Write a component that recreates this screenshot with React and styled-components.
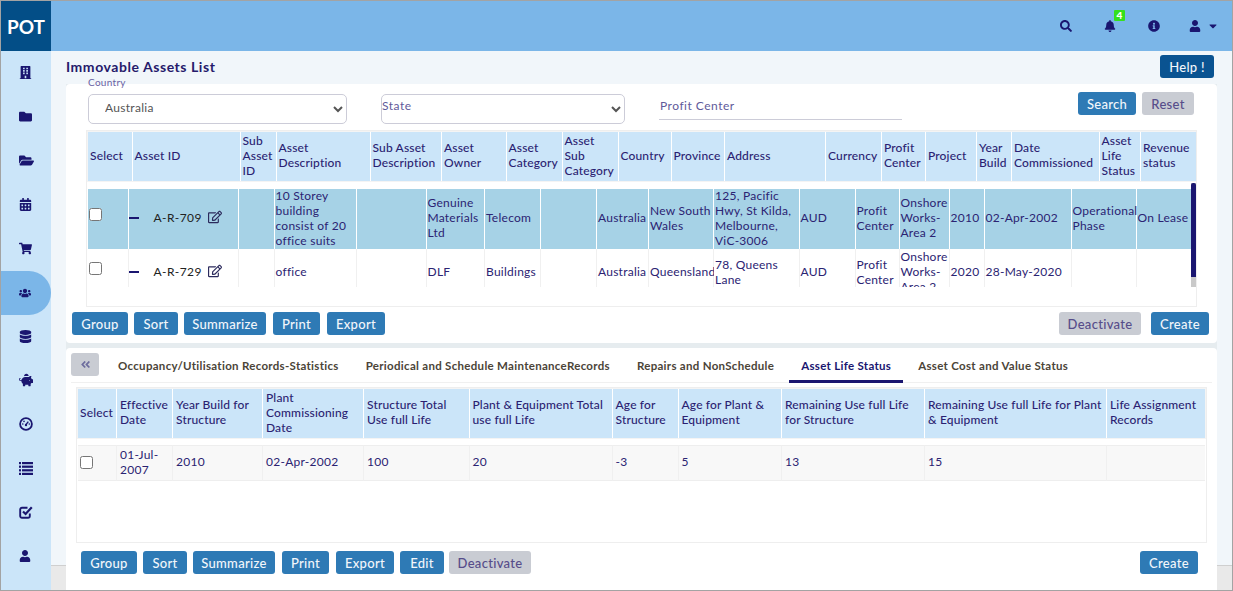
import React from "react";
import styled, { createGlobalStyle } from "styled-components";
import {
  FaBuilding,
  FaFolder,
  FaFolderOpen,
  FaCalendarAlt,
  FaShoppingCart,
  FaUsers,
  FaDatabase,
  FaPiggyBank,
  FaUser,
  FaSearch,
  FaBell,
  FaInfoCircle,
  FaCaretDown,
  FaRegEdit,
  FaAngleDoubleLeft,
} from "react-icons/fa";

const NAVY = "#1a1670";
const TEXT = "#2b2372";

const GlobalStyle = createGlobalStyle`
  * { box-sizing: border-box; }
  html, body { margin: 0; padding: 0; }
  body { font-family: Lato, "Open Sans", sans-serif; font-size: 12px; color: ${TEXT}; }
`;

const Frame = styled.div`
  width: 1233px;
  height: 591px;
  border: 1px solid #a3a3a3;
  display: grid;
  grid-template-columns: 50px 1fr;
  grid-template-rows: 50px 1fr;
  overflow: hidden;
`;

const Logo = styled.div`
  background: #034e87;
  color: #fff;
  font-size: 19px;
  font-weight: 700;
  display: flex;
  align-items: center;
  justify-content: center;
`;

const TopBar = styled.header`
  background: #7bb6e8;
  display: flex;
  align-items: center;
  justify-content: flex-end;
  gap: 32px;
  padding: 0 13px 0 0;
  color: ${NAVY};
  font-size: 12px;
`;

const TopIcon = styled.span`
  position: relative;
  display: flex;
  align-items: center;
  gap: 6px;
  height: 12px;
  &:last-child { margin-left: -3px; }
`;

const Badge = styled.span`
  position: absolute;
  top: -10px;
  left: 10px;
  width: 11px;
  height: 11px;
  background: #35e01c;
  color: #fff;
  font-size: 10px;
  font-weight: 900;
  line-height: 11px;
  text-align: center;
  border-radius: 1px;
`;

const Sidebar = styled.nav`
  background: #cbe5f9;
  display: flex;
  flex-direction: column;
`;

const NavItem = styled.div`
  height: 44px;
  flex: none;
  display: flex;
  align-items: center;
  padding: 0 0 ${(p) => (p.$active ? 0 : 2)}px 18px;
  color: ${NAVY};
  background: ${(p) => (p.$active ? "#7bb6e8" : "transparent")};
  border-radius: ${(p) => (p.$active ? "0 22px 22px 0" : "0")};
  svg {
    height: ${(p) => p.$size}px;
    width: auto;
  }
`;

const Main = styled.main`
  padding: 0 15px;
  min-width: 0;
  overflow: hidden;
  background: linear-gradient(to bottom, #f1f6fa 514px, #cfcfcf 514px, #cfcfcf 515px, #e9e9e9 515px);
`;

const TitleRow = styled.div`
  height: 33px;
  display: flex;
  justify-content: space-between;
  align-items: flex-start;
  padding: 4px 3px 0 0;
`;

const Title = styled.h1`
  margin: 4px 0 0;
  font-size: 14px;
  line-height: 16px;
  font-weight: 700;
  letter-spacing: 0.55px;
  color: #261a6b;
`;

const Stack = styled.div`
  display: flex;
  flex-direction: column;
  gap: 5px;
  background: #e6ecef;
`;

const Card = styled.section`
  background: #fff;
  border-radius: 4px;
  padding: ${(p) => p.$pad};
  height: ${(p) => p.$h}px;
  flex: none;
`;

const FilterRow = styled.div`
  display: flex;
  align-items: flex-start;
  gap: 34px;
  margin: 0 15px 6px 16px;
  height: 32px;
`;

const Field = styled.div`
  position: relative;
  margin-top: 2px;
`;

const FloatLabel = styled.label`
  position: absolute;
  left: 0;
  top: -18px;
  font-size: 10px;
  letter-spacing: 0.3px;
  line-height: 12px;
  color: #6a62a3;
`;

const RestLabel = styled.label`
  position: absolute;
  left: 1px;
  top: 4px;
  font-size: 12px;
  letter-spacing: 0.5px;
  line-height: 15px;
  color: #5f5a9a;
`;

const Select = styled.select`
  display: block;
  width: ${(p) => p.$w}px;
  height: 30px;
  background: #fff;
  border: 1px solid #ccccd8;
  border-radius: 5px;
  font-family: Lato, sans-serif;
  font-size: 12px;
  letter-spacing: 0.3px;
  color: #555;
  padding: 0 0 3px 12px;
`;

const TextInput = styled.input`
  display: block;
  width: 243px;
  height: 25px;
  margin-top: 3px;
  border: 0;
  border-bottom: 1px solid #ccccd8;
  outline: 0;
  padding: 0 0 3px 1px;
  font-family: Lato, sans-serif;
  font-size: 12px;
  letter-spacing: 0.5px;
  &::placeholder { color: #5f5a9a; opacity: 1; }
`;

const RowButtons = styled.div`
  margin-left: auto;
  display: flex;
  gap: 6px;
`;

const ButtonBar = styled.div`
  display: flex;
  gap: 6px;
  height: 23px;
  margin: ${(p) => p.$margin};
`;

const Spacer = styled.span`
  flex: 1;
`;

const Button = styled.button`
  height: 23px;
  width: ${(p) => p.$w}px;
  padding: 0;
  border: 0;
  border-radius: 3px;
  font-family: Lato, sans-serif;
  font-size: 13px;
  font-weight: 500;
  letter-spacing: 0.3px;
  background: ${(p) => (p.$muted ? "#c9ccd3" : p.$dark ? "#0a5391" : "#2e7ab5")};
  color: ${(p) => (p.$muted ? "#574d8a" : "#f2f6fb")};
  margin-left: ${(p) => p.$ml || 0}px;
`;

const TableBox = styled.div`
  border: 1px solid #eee;
  height: ${(p) => p.$h}px;
  margin: ${(p) => p.$margin};
  overflow: hidden;
`;

const HeadWrap = styled.div`
  padding: 1px;
  background: #f4f4f4;
`;

const Row = styled.div`
  display: grid;
  grid-template-columns: ${(p) => p.$cols};
  width: max-content;
`;

const HeadCell = styled.div`
  height: 49px;
  display: flex;
  align-items: center;
  padding: 0 1px 3px ${(p) => p.$pl}px;
  background: #cbe5f9;
  border-right: 1px solid #fff;
  font-size: 12px;
  line-height: 15px;
  font-weight: 500;
  letter-spacing: 0.15px;
  color: #2b1f72;
  &:last-child { border-right: 0; }
`;

const ScrollArea = styled.div`
  position: relative;
  margin: 1px 0 0 1px;
  width: 1108px;
  height: 104px;
`;

const Scroller = styled.div`
  height: 100%;
  padding-top: 6px;
  overflow: hidden;
`;

const ScrollTrack = styled.div`
  position: absolute;
  top: 0;
  right: 0;
  bottom: 0;
  width: 5px;
  background: #c9c9c9;
`;

const ScrollThumb = styled.div`
  height: 94px;
  background: ${NAVY};
  border-radius: 2px 2px 0 0;
`;

const BodyCell = styled.div`
  height: ${(p) => p.$h}px;
  display: flex;
  align-items: center;
  padding: 0 0 ${(p) => p.$pb}px 1px;
  border-right: 1px solid ${(p) => p.$line};
  background: ${(p) => p.$bg};
  font-size: 12px;
  line-height: 15px;
  letter-spacing: 0.25px;
  color: ${TEXT};
  &:last-child { border-right: 0; }
`;

const LifeCell = styled.div`
  height: 36px;
  display: flex;
  align-items: center;
  padding: 0 0 3px 3px;
  background: #f8f8f8;
  border-top: 1px solid #eee;
  border-bottom: 1px solid #eee;
  border-right: 1px solid #f0f0f0;
  font-size: 12px;
  line-height: 15px;
  letter-spacing: 0.25px;
  color: ${TEXT};
  &:last-child { border-right: 0; }
`;

const LifeRows = styled.div`
  margin: 6px 0 0 1px;
`;

const Check = styled.input.attrs({ type: "checkbox" })`
  width: 13px;
  height: 13px;
  margin: ${(p) => (p.$raise ? "0 0 6px 0" : "2px 0 0 -1px")};
`;

const IdWrap = styled.div`
  display: flex;
  align-items: center;
  width: 100%;
  color: #222;
`;

const Dash = styled.span`
  width: 10px;
  height: 2px;
  margin: 0 15px 0 -1px;
  background: ${NAVY};
`;

const IdText = styled.span`
  width: 54px;
  letter-spacing: 0.4px;
`;

const EditIcon = styled.span`
  display: flex;
  color: #2b2a5c;
  font-size: 14px;
  margin-bottom: 2px;
`;

const TabBar = styled.div`
  display: flex;
  align-items: flex-start;
  height: 30px;
  margin: 0 5px 4px;
  border-bottom: 1px solid #f0f0f0;
`;

const Collapse = styled.button`
  width: 28px;
  height: 23px;
  padding: 0;
  border: 0;
  border-radius: 3px;
  background: #c9ccd3;
  color: #6d6d9e;
  font-size: 11px;
  margin-right: 4px;
  display: flex;
  align-items: center;
  justify-content: center;
`;

const Tab = styled.div`
  height: 30px;
  margin-left: 3px;
  padding: 5px 12px 0;
  font-size: 11.5px;
  line-height: 16px;
  font-weight: 700;
  letter-spacing: 0.3px;
  white-space: nowrap;
  color: ${(p) => (p.$active ? NAVY : "#4b4438")};
  border-bottom: 3px solid ${(p) => (p.$active ? NAVY : "transparent")};
`;

const GaugeIcon = () => (
  <svg viewBox="0 0 14 14" fill="none">
    <circle cx="7" cy="7" r="5.9" stroke="currentColor" strokeWidth="1.8" />
    <path d="M7 7.6 L9.3 4.6" stroke="currentColor" strokeWidth="1.4" />
    <circle cx="7" cy="8" r="1.2" fill="currentColor" />
    <circle cx="3.8" cy="7" r="0.8" fill="currentColor" />
    <circle cx="5" cy="4.4" r="0.8" fill="currentColor" />
    <circle cx="10.3" cy="7" r="0.8" fill="currentColor" />
  </svg>
);

const BarsIcon = () => (
  <svg viewBox="0 0 14 13" fill="currentColor">
    {[0, 3.6, 7.2, 10.8].map((y) => (
      <g key={y}>
        <rect x="0" y={y} width="2" height="2.2" />
        <rect x="3" y={y} width="11" height="2.2" />
      </g>
    ))}
  </svg>
);

const TaskIcon = () => (
  <svg viewBox="0 0 14 14" fill="none" stroke="currentColor">
    <path d="M10.8 8.5 V11 A1.8 1.8 0 0 1 9 12.8 H3 A1.8 1.8 0 0 1 1.2 11 V4.5 A1.8 1.8 0 0 1 3 2.7 H8.5" strokeWidth="1.9" />
    <path d="M4 6.5 L6.6 9 L12.8 2.2" strokeWidth="2.2" />
  </svg>
);

const navIcons = [
  [FaBuilding, 13],
  [FaFolder, 13],
  [FaFolderOpen, 15],
  [FaCalendarAlt, 13],
  [FaShoppingCart, 13],
  [FaUsers, 12],
  [FaDatabase, 13],
  [FaPiggyBank, 14],
  [GaugeIcon, 14],
  [BarsIcon, 13],
  [TaskIcon, 14],
  [FaUser, 12],
];

const assetHeadCols = "44.5px 108px 36px 94px 71.5px 64.5px 56px 56px 53px 53.5px 101px 56px 44px 51px 35px 87.5px 41.5px 54.5px";
const assetBodyCols = "40.5px 110px 36px 82px 70px 58.5px 56px 56px 52px 65px 85.5px 56px 44px 50px 35px 87px 65px 54px";
const lifeCols = "39px 56px 90px 101px 105.5px 143px 66px 103.5px 143px 182px 98px";

const assetHeads = [
  "Select", "Asset ID", "Sub Asset ID", "Asset Description", "Sub Asset Description", "Asset Owner",
  "Asset Category", "Asset Sub Category", "Country", "Province", "Address", "Currency", "Profit Center",
  "Project", "Year Build", "Date Commissioned", "Asset Life Status", "Revenue status",
];

const assets = [
  {
    id: "A-R-709", h: 60, pb: 3, bg: "#a6d2e6", line: "#fff",
    cells: ["", "10 Storey building consist of 20 office suits", "", "Genuine Materials Ltd", "Telecom", "", "Australia", "New South Wales", "125, Pacific Hwy, St Kilda, Melbourne, ViC-3006", "AUD", "Profit Center", "Onshore Works-Area 2", "2010", "02-Apr-2002", "Operational Phase", "On Lease"],
  },
  {
    id: "A-R-729", h: 47, pb: 2, bg: "#fff", line: "#f0f0f0",
    cells: ["", "office", "", "DLF", "Buildings", "", "Australia", "Queensland", "78, Queens Lane", "AUD", "Profit Center", "Onshore Works-Area 2", "2020", "28-May-2020", "", ""],
  },
];

const lifeHeads = [
  "Select", "Effective Date", "Year Build for Structure", "Plant Commissioning Date", "Structure Total Use full Life",
  "Plant & Equipment Total use full Life", "Age for Structure", "Age for Plant & Equipment",
  "Remaining Use full Life for Structure", "Remaining Use full Life for Plant & Equipment", "Life Assignment Records",
];

const lifeRow = ["01-Jul-2007", "2010", "02-Apr-2002", "100", "20", "-3", "5", "13", "15", ""];

const tabs = [
  "Occupancy/Utilisation Records-Statistics",
  "Periodical and Schedule MaintenanceRecords",
  "Repairs and NonSchedule",
  "Asset Life Status",
  "Asset Cost and Value Status",
];

export default function App() {
  return (
    <Frame>
      <GlobalStyle />
      <Logo>POT</Logo>
      <TopBar>
        <TopIcon><FaSearch /></TopIcon>
        <TopIcon><FaBell /><Badge>4</Badge></TopIcon>
        <TopIcon><FaInfoCircle /></TopIcon>
        <TopIcon><FaUser /><FaCaretDown /></TopIcon>
      </TopBar>
      <Sidebar>
        {navIcons.map(([Icon, size], i) => (
          <NavItem key={i} $active={i === 5} $size={size}><Icon /></NavItem>
        ))}
      </Sidebar>
      <Main>
        <TitleRow>
          <Title>Immovable Assets List</Title>
          <Button $dark $w={54}>Help !</Button>
        </TitleRow>
        <Stack>
          <Card $h={259} $pad="8px 8px 8px 6px">
            <FilterRow>
              <Field>
                <FloatLabel>Country</FloatLabel>
                <Select $w={259} defaultValue="Australia"><option>Australia</option></Select>
              </Field>
              <Field>
                <Select $w={244} />
                <RestLabel>State</RestLabel>
              </Field>
              <TextInput placeholder="Profit Center" />
              <RowButtons>
                <Button $w={58}>Search</Button>
                <Button $muted $w={52}>Reset</Button>
              </RowButtons>
            </FilterRow>
            <TableBox $h={177} $margin="0 12px 5px 14px">
              <HeadWrap>
                <Row $cols={assetHeadCols}>
                  {assetHeads.map((h) => <HeadCell key={h} $pl={2}>{h}</HeadCell>)}
                </Row>
              </HeadWrap>
              <ScrollArea>
                <Scroller>
                  {assets.map((a) => (
                    <Row key={a.id} $cols={assetBodyCols}>
                      <BodyCell $h={a.h} $pb={a.pb} $bg={a.bg} $line={a.line}><Check $raise /></BodyCell>
                      <BodyCell $h={a.h} $pb={a.pb} $bg={a.bg} $line={a.line}>
                        <IdWrap>
                          <Dash />
                          <IdText>{a.id}</IdText>
                          <EditIcon><FaRegEdit /></EditIcon>
                        </IdWrap>
                      </BodyCell>
                      {a.cells.map((c, i) => (
                        <BodyCell key={i} $h={a.h} $pb={a.pb} $bg={a.bg} $line={a.line}>{c}</BodyCell>
                      ))}
                    </Row>
                  ))}
                </Scroller>
                <ScrollTrack><ScrollThumb /></ScrollTrack>
              </ScrollArea>
            </TableBox>
            <ButtonBar $margin="0">
              <Button $w={56}>Group</Button>
              <Button $w={44}>Sort</Button>
              <Button $w={82}>Summarize</Button>
              <Button $w={47} $ml={1}>Print</Button>
              <Button $w={58} $ml={1}>Export</Button>
              <Spacer />
              <Button $muted $w={82}>Deactivate</Button>
              <Button $w={58} $ml={4}>Create</Button>
            </ButtonBar>
          </Card>
          <Card $h={300} $pad="5px 0 0">
            <TabBar>
              <Collapse><FaAngleDoubleLeft /></Collapse>
              {tabs.map((t) => <Tab key={t} $active={t === "Asset Life Status"}>{t}</Tab>)}
            </TabBar>
            <TableBox $h={156} $margin="0 10px 8px 10px">
              <HeadWrap>
                <Row $cols={lifeCols}>
                  {lifeHeads.map((h, i) => <HeadCell key={h} $pl={i === 0 ? 2 : 3}>{h}</HeadCell>)}
                </Row>
              </HeadWrap>
              <LifeRows>
                <Row $cols={lifeCols}>
                  <LifeCell><Check /></LifeCell>
                  {lifeRow.map((c, i) => <LifeCell key={i}>{c}</LifeCell>)}
                </Row>
              </LifeRows>
            </TableBox>
            <ButtonBar $margin="0 19px 0 15px">
              <Button $w={56}>Group</Button>
              <Button $w={44}>Sort</Button>
              <Button $w={82}>Summarize</Button>
              <Button $w={47} $ml={1}>Print</Button>
              <Button $w={58} $ml={1}>Export</Button>
              <Button $w={44}>Edit</Button>
              <Button $muted $w={82} $ml={-1}>Deactivate</Button>
              <Spacer />
              <Button $w={58}>Create</Button>
            </ButtonBar>
          </Card>
        </Stack>
      </Main>
    </Frame>
  );
}
